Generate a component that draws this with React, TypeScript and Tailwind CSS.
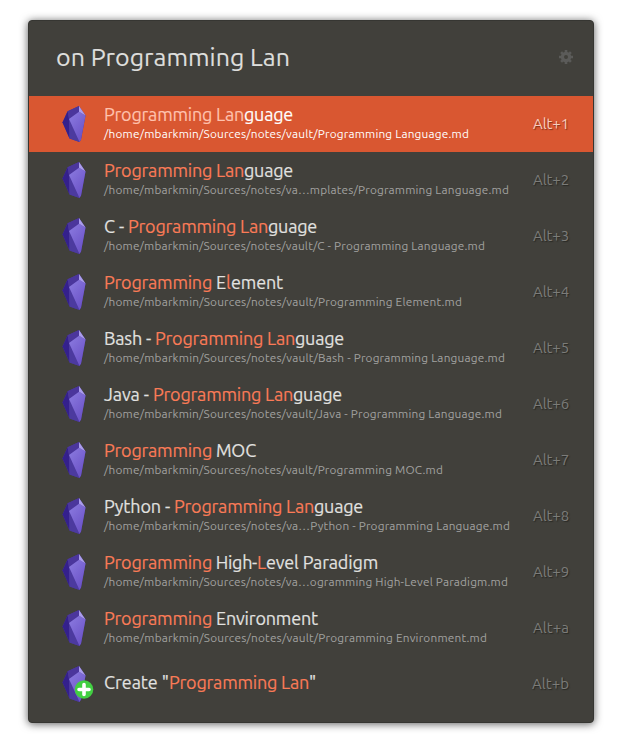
import { useLayoutEffect, useRef, useState } from 'react';

type Segment = { text: string; width: number; match?: boolean };
type Result = { title: Segment[]; path?: string; pathWidth?: number; shortcut: string };

const PL: Segment = { text: 'Programming Lan', width: 140, match: true };
const GUAGE: Segment = { text: 'guage', width: 49 };
const P: Segment = { text: 'Programming', width: 108, match: true };

const results: Result[] = [
  { title: [PL, GUAGE], path: '/home/mbarkmin/Sources/notes/vault/Programming Language.md', pathWidth: 365, shortcut: 'Alt+1' },
  { title: [PL, GUAGE], path: '/home/mbarkmin/Sources/notes/va…mplates/Programming Language.md', pathWidth: 405, shortcut: 'Alt+2' },
  { title: [{ text: 'C - ', width: 24 }, PL, GUAGE], path: '/home/mbarkmin/Sources/notes/vault/C - Programming Language.md', pathWidth: 381, shortcut: 'Alt+3' },
  { title: [P, { text: ' E', width: 14 }, { text: 'l', width: 5, match: true }, { text: 'ement', width: 52 }], path: '/home/mbarkmin/Sources/notes/vault/Programming Element.md', pathWidth: 358, shortcut: 'Alt+4' },
  { title: [{ text: 'Bash - ', width: 51 }, PL, GUAGE], path: '/home/mbarkmin/Sources/notes/vault/Bash - Programming Language.md', pathWidth: 401, shortcut: 'Alt+5' },
  { title: [{ text: 'Java - ', width: 49 }, PL, GUAGE], path: '/home/mbarkmin/Sources/notes/vault/Java - Programming Language.md', pathWidth: 398, shortcut: 'Alt+6' },
  { title: [P, { text: ' MOC', width: 44 }], path: '/home/mbarkmin/Sources/notes/vault/Programming MOC.md', pathWidth: 339, shortcut: 'Alt+7' },
  { title: [{ text: 'Python - ', width: 70 }, PL, GUAGE], path: '/home/mbarkmin/Sources/notes/va…Python - Programming Language.md', pathWidth: 406, shortcut: 'Alt+8' },
  { title: [P, { text: ' High-', width: 45 }, { text: 'L', width: 9, match: true }, { text: 'evel Paradigm', width: 112 }], path: '/home/mbarkmin/Sources/notes/va…ogramming High-Level Paradigm.md', pathWidth: 404, shortcut: 'Alt+9' },
  { title: [P, { text: ' Environment', width: 106 }], path: '/home/mbarkmin/Sources/notes/vault/Programming Environment.md', pathWidth: 383, shortcut: 'Alt+a' },
  { title: [{ text: 'Create "', width: 65 }, PL, { text: '"', width: 7 }], shortcut: 'Alt+b' },
];

/** Text tracked so that it fills the given width. */
function Tracked({ text, width, className = '' }: { text: string; width: number; className?: string }) {
  const ref = useRef<HTMLSpanElement>(null);
  const [spacing, setSpacing] = useState(0);
  useLayoutEffect(() => {
    if (ref.current) {
      const natural = ref.current.getBoundingClientRect().width;
      setSpacing((s) => s + (width - natural) / text.length);
    }
  }, [text, width]);
  return (
    <span ref={ref} className={`inline-block whitespace-pre ${className}`} style={{ letterSpacing: spacing }}>
      {text}
    </span>
  );
}

function Crystal({ withPlus }: { withPlus: boolean }) {
  return (
    <svg viewBox="0 0 36 40" className="h-10 w-9 shrink-0">
      <defs>
        <linearGradient id="face" x1="0" y1="0" x2="0.7" y2="1">
          <stop offset="0" stopColor="#8c7ce0" />
          <stop offset="1" stopColor="#6a51c6" />
        </linearGradient>
      </defs>
      <path d="M21 2 9.6 7.2 4.5 18.5 11.5 34.5 21.5 38 23 35.5 27.5 11.5z" fill="#4b369c" />
      <path d="M9.6 7.2 4.5 18.5 11.5 34.5 11 15z" fill="#34208c" />
      <path d="M9.6 7.2 21 2 21 7.8 11 15z" fill="#4b369c" />
      <path d="M11 15 11.5 34.5 21.5 38z" fill="#4c3a9f" />
      <path d="M11 15 21 7.8 27.5 11.5 23 35.5 21.5 38z" fill="url(#face)" />
      <path d="M21 2 27.5 11.5 21 7.8z" fill="#ab9dec" />
      {withPlus && (
        <>
          <circle cx="26" cy="25.5" r="9.3" fill="#42cf42" />
          <path d="M26 20.5v10M21 25.5h10" stroke="#fff" strokeWidth="3.6" strokeLinecap="round" />
        </>
      )}
    </svg>
  );
}

function Gear() {
  return (
    <svg viewBox="0 0 14 14" className="h-3.5 w-3.5">
      <g stroke="#5b5b59" strokeWidth="2.6">
        <path d="M7 0v3M7 11v3M0 7h3M11 7h3M2.1 2.1l2 2M9.9 9.9l2 2M11.9 2.1l-2 2M4.1 9.9l-2 2" />
        <circle cx="7" cy="7" r="3.6" fill="none" strokeWidth="3.2" />
      </g>
    </svg>
  );
}

function Row({ result, selected }: { result: Result; selected: boolean }) {
  return (
    <li className={`flex h-14 items-center pr-6 pl-[29px] ${selected ? 'bg-[#d95731]' : ''}`}>
      <Crystal withPlus={!result.path} />
      <div className="ml-[10px] min-w-0 flex-1 pb-0.5 whitespace-nowrap">
        <div className={`flex h-[22px] text-[18px] leading-[20px] [-webkit-text-stroke:0.15px] ${selected ? 'text-white' : 'text-[#e2e2e0]'}`}>
          {result.title.map((s, i) => (
            <Tracked
              key={i}
              text={s.text}
              width={s.width}
              className={s.match ? (selected ? 'text-[#ffc2ae]' : 'text-[#fb7b57]') : ''}
            />
          ))}
        </div>
        {result.path && (
          <div className={`flex h-4 text-[11.8px] leading-4 ${selected ? 'text-white' : 'text-[#a2a2a0]'}`}>
            <Tracked text={result.path} width={result.pathWidth ?? 0} />
          </div>
        )}
      </div>
      <div
        className={`text-[15px] ${selected ? 'text-[#f8cdbf] [text-shadow:1px_1px_1px_#803018]' : 'text-[#7c7c79] [text-shadow:1px_1px_1px_#292925]'}`}
      >
        <Tracked text={result.shortcut} width={result.shortcut === 'Alt+b' ? 37 : 36} />
      </div>
    </li>
  );
}

export default function App() {
  return (
    <div className="flex h-[746px] w-[620px] items-start bg-white pt-5 pl-7 font-['Ubuntu','Noto_Sans',sans-serif]">
      <main className="h-[703px] w-[566px] rounded-[4px] border border-[#363632] bg-[#41403b] shadow-[0_1px_9px_rgba(0,0,0,0.65)]">
        <header className="flex h-[75px] items-center justify-between pr-5 pb-[3px] pl-[27px] text-[25px] leading-[30px] text-[#dededc] [-webkit-text-stroke:0.15px]">
          <Tracked text="on Programming Lan" width={234} />
          <Gear />
        </header>
        <ul>
          {results.map((result, i) => (
            <Row key={result.shortcut} result={result} selected={i === 0} />
          ))}
        </ul>
      </main>
    </div>
  );
}
